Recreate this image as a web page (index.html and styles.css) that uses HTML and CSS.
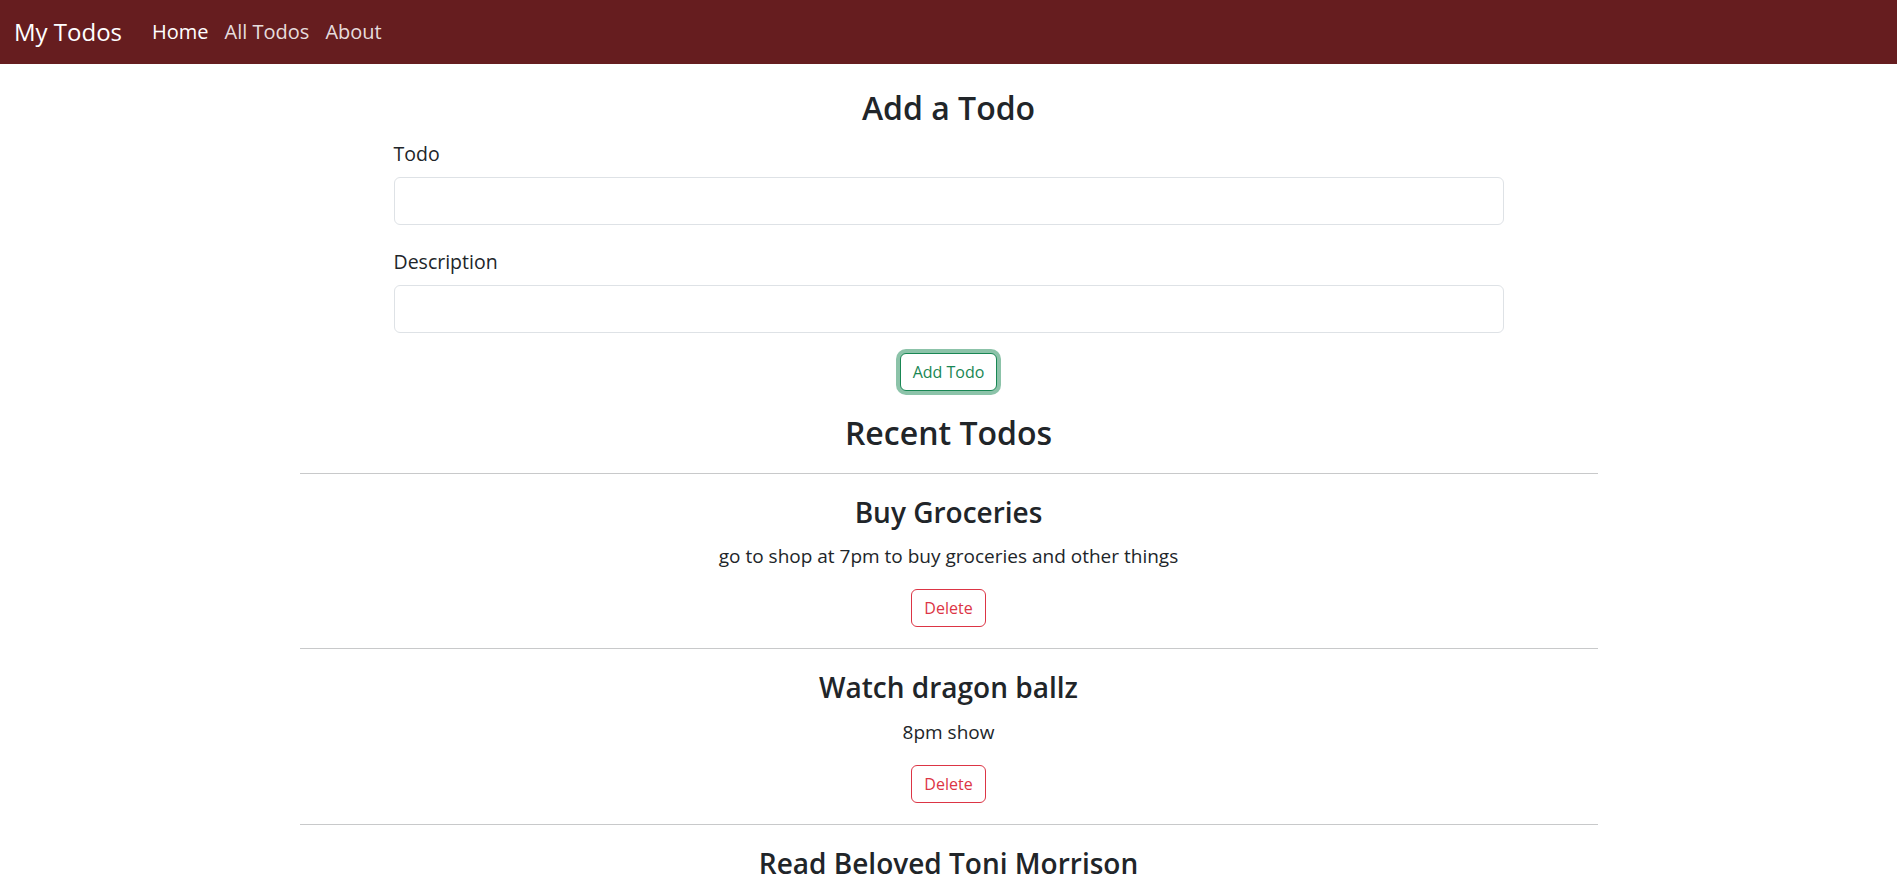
FILE: index.html
```html
<!DOCTYPE html>
<html lang="en">
<head>
<meta charset="utf-8">
<title>My Todos</title>
<link rel="stylesheet" href="styles.css">
</head>
<body>
<nav class="navbar">
  <a class="brand" href="#">My Todos</a>
  <ul class="nav">
    <li><a class="nav-link active" href="#">Home</a></li>
    <li><a class="nav-link" href="#">All Todos</a></li>
    <li><a class="nav-link" href="#">About</a></li>
  </ul>
</nav>
<main class="main">
  <h2 class="title">Add a Todo</h2>
  <form class="todo-form">
    <div class="field">
      <label class="label" for="todo">Todo</label>
      <input class="input" id="todo" type="text">
    </div>
    <div class="field">
      <label class="label" for="desc">Description</label>
      <input class="input" id="desc" type="text">
    </div>
    <div class="actions">
      <button type="button" class="btn btn-success">Add Todo</button>
    </div>
  </form>
  <h2 class="title recent">Recent Todos</h2>
  <section class="list">
    <hr class="rule">
    <div class="todo">
      <h3 class="todo-title">Buy Groceries</h3>
      <p class="lead">go to shop at 7pm to buy groceries and other things</p>
      <button type="button" class="btn btn-danger">Delete</button>
    </div>
    <hr class="rule">
    <div class="todo">
      <h3 class="todo-title">Watch dragon ballz</h3>
      <p class="lead">8pm show</p>
      <button type="button" class="btn btn-danger">Delete</button>
    </div>
    <hr class="rule">
    <div class="todo">
      <h3 class="todo-title">Read Beloved Toni Morrison</h3>
    </div>
  </section>
</main>
</body>
</html>
```
FILE: styles.css
```css
* { box-sizing: border-box; }
html, body { margin: 0; padding: 0; }
body {
  font-family: "Segoe UI", "Open Sans", sans-serif;
  font-size: 16px;
  line-height: 1.5;
  color: #212529;
  background: #fff;
  overflow: hidden;
}
.navbar {
  display: flex;
  align-items: center;
  height: 64px;
  padding: 0 12px 0 14px;
  background: #661d1f;
}
.brand {
  font-size: 24px;
  line-height: 36px;
  color: #fff;
  text-decoration: none;
  margin-right: 22px;
}
.nav {
  display: flex;
  list-style: none;
  margin: 0;
  padding: 0;
}
.nav-link {
  display: block;
  padding: 0 8px;
  font-size: 20px;
  line-height: 30px;
  color: rgba(255,255,255,.86);
  text-decoration: none;
}
.nav-link.active { color: #fff; }
.main {
  max-width: 1298px;
  margin: 0 auto;
  padding-top: 25px;
}
.title {
  margin: 0 0 12px;
  text-align: center;
  font-size: 32px;
  line-height: 1.2;
  font-weight: 600;
}
.todo-form {
  width: 1110px;
  margin: 0 auto;
}
.field { margin-bottom: 22px; }
.field + .field { margin-bottom: 20px; }
.label {
  display: block;
  font-size: 19.5px;
  line-height: 30px;
  margin-bottom: 8px;
}
.input {
  display: block;
  width: 100%;
  height: 48px;
  padding: 8px 16px;
  font: inherit;
  font-size: 20px;
  border: 1px solid #dee2e6;
  border-radius: 6px;
  background: #fff;
}
.actions { text-align: center; }
.btn {
  display: inline-block;
  height: 38px;
  padding: 0 12px;
  font: inherit;
  font-size: 16px;
  line-height: 36px;
  background: #fff;
  border: 1px solid;
  border-radius: 6px;
  cursor: pointer;
}
.btn-success {
  color: #198754;
  border-color: #198754;
  box-shadow: 0 0 0 4px rgba(25,135,84,.5);
}
.btn-danger {
  color: #dc3545;
  border-color: #dc3545;
}
.recent { margin-top: 23px; margin-bottom: 20px; }
.rule {
  margin: 0;
  border: 0;
  border-top: 1px solid #c8c9ca;
}
.todo {
  text-align: center;
  padding: 22px 0 21px;
}
.todo-title {
  margin: 0 0 12px;
  font-size: 28px;
  line-height: 1.2;
  font-weight: 600;
}
.lead {
  margin: 0 0 18px;
  font-size: 19px;
  line-height: 30px;
  font-weight: 400;
}
```
